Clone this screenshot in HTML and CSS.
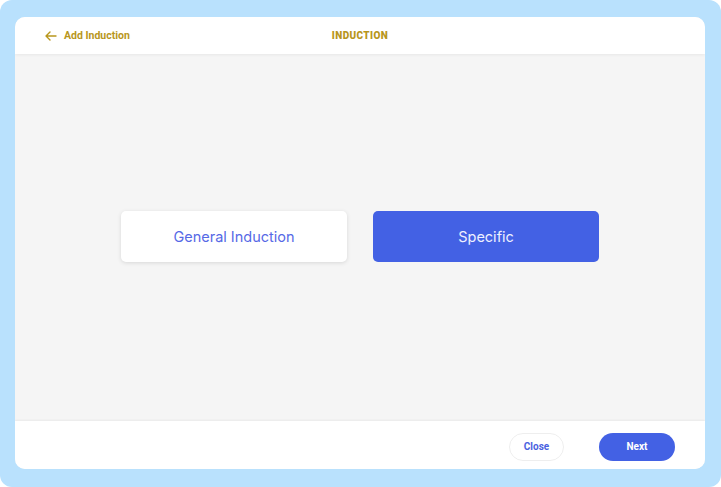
FILE: index.html
```html
<!DOCTYPE html>
<html>
<head>
<meta charset="utf-8">
<link rel="stylesheet" href="styles.css">
</head>
<body>
<div class="frame">
  <div class="card">
    <header class="header">
      <a class="back">
        <svg width="12" height="10" viewBox="0 0 12 10"><path d="M11 5H1.5M5 1L1 5l4 4" fill="none" stroke="#b8961c" stroke-width="1.4" stroke-linecap="round" stroke-linejoin="round"/></svg>
        <span>Add Induction</span>
      </a>
      <div class="title">INDUCTION</div>
    </header>
    <main class="main">
      <button class="choice general">General Induction</button>
      <button class="choice specific">Specific</button>
    </main>
    <footer class="footer">
      <button class="btn close">Close</button>
      <button class="btn next">Next</button>
    </footer>
  </div>
</div>
</body>
</html>
```
FILE: styles.css
```css
* { box-sizing: border-box; }
html, body { margin: 0; padding: 0; background: #ffffff; }
body { font-family: "Inter", "Roboto", sans-serif; }
.frame {
  width: 721px;
  height: 487px;
  background: #b9e1fd;
  border-radius: 12px;
  padding: 17px 16px 18px 15px;
}
.card {
  width: 690px;
  height: 452px;
  background: #f5f5f5;
  border-radius: 10px;
  overflow: hidden;
  display: flex;
  flex-direction: column;
}
.header {
  height: 37px;
  background: #fff;
  position: relative;
  display: flex;
  align-items: center;
  padding-left: 30px;
  box-shadow: 0 1px 3px rgba(0,0,0,0.06);
  z-index: 1;
}
.back {
  display: flex;
  align-items: center;
  gap: 7px;
  color: #b8961c;
  font-family: "Roboto", sans-serif;
  font-weight: 700;
  font-size: 10.5px;
}
.title {
  position: absolute;
  left: 0;
  right: 0;
  text-align: center;
  color: #b8961c;
  font-family: "Roboto", sans-serif;
  font-weight: 900;
  font-size: 10px;
  letter-spacing: 0.4px;
  pointer-events: none;
}
.main {
  flex: 1;
  display: flex;
  align-items: center;
  justify-content: center;
  gap: 26px;
  padding-bottom: 2px;
}
.choice {
  width: 226px;
  height: 51px;
  border: none;
  border-radius: 5px;
  font-family: "Inter", sans-serif;
  font-size: 14.5px;
  font-weight: 400;
}
.general {
  background: #fff;
  color: #5669e6;
  box-shadow: 0 1px 4px rgba(0,0,0,0.12);
}
.specific {
  background: #4361e4;
  color: #eef0ff;
}
.footer {
  height: 48px;
  background: #fff;
  display: flex;
  align-items: center;
  justify-content: flex-end;
  gap: 35px;
  padding-right: 30px;
  padding-top: 3px;
  box-shadow: 0 -1px 2px rgba(0,0,0,0.05);
}
.btn {
  height: 28px;
  border-radius: 14px;
  font-family: "Roboto", sans-serif;
  font-weight: 700;
  font-size: 10px;
}
.close {
  width: 55px;
  background: #fff;
  border: 1px solid #eeeeee;
  color: #4a62e0;
}
.next {
  width: 76px;
  background: #4361e4;
  border: none;
  color: #fff;
}
```
